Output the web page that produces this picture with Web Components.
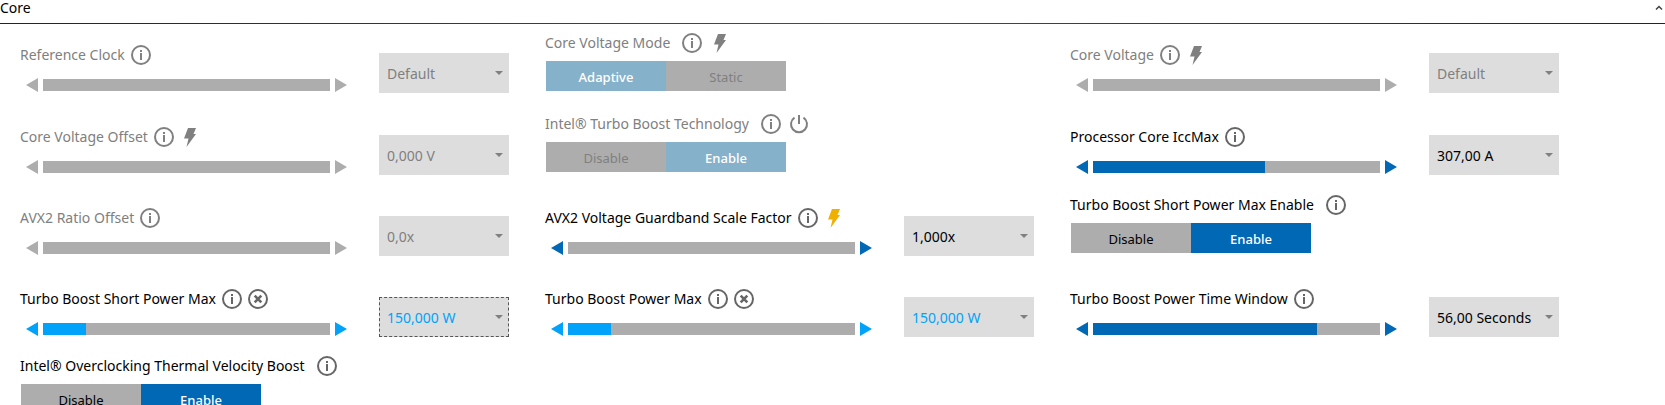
<!DOCTYPE html>
<html lang="en">
<head>
<meta charset="utf-8">
<title>Core tuning</title>
<style>
body { margin: 0; background: #fff; color: #000; font: 14px/20px "Noto Sans", "Open Sans", sans-serif; overflow: hidden; }
</style>
</head>
<body>
<tuning-section heading="Core">
  <tuning-slider state="disabled" value="0" reading="Default">Reference Clock</tuning-slider>
  <tuning-toggle state="disabled" options="Adaptive,Static" selected="0" extra="bolt">Core Voltage Mode</tuning-toggle>
  <tuning-slider state="disabled" value="0" reading="Default" extra="bolt">Core Voltage</tuning-slider>

  <tuning-slider state="disabled" value="0" reading="0,000 V" extra="bolt">Core Voltage Offset</tuning-slider>
  <tuning-toggle state="disabled" options="Disable,Enable" selected="1" extra="power">Intel® Turbo Boost Technology</tuning-toggle>
  <tuning-slider value="60" reading="307,00 A">Processor Core IccMax</tuning-slider>

  <tuning-slider state="disabled" value="0" reading="0,0x">AVX2 Ratio Offset</tuning-slider>
  <tuning-slider value="0" reading="1,000x" extra="bolt">AVX2 Voltage Guardband Scale Factor</tuning-slider>
  <tuning-toggle options="Disable,Enable" selected="1">Turbo Boost Short Power Max Enable</tuning-toggle>

  <tuning-slider state="changed" focused value="15" reading="150,000 W" extra="cross">Turbo Boost Short Power Max</tuning-slider>
  <tuning-slider state="changed" value="15" reading="150,000 W" extra="cross">Turbo Boost Power Max</tuning-slider>
  <tuning-slider value="78" reading="56,00 Seconds">Turbo Boost Power Time Window</tuning-slider>

  <tuning-toggle options="Disable,Enable" selected="1">Intel® Overclocking Thermal Velocity Boost</tuning-toggle>
</tuning-section>

<script>
const ICONS = {
  info: '<circle cx="10" cy="10" r="9" fill="none" stroke="currentColor" stroke-width="2"/><path d="M9 5h2v2H9zM9 8h2v7H9z" fill="currentColor"/>',
  bolt: '<path d="M8 1h8l-2.5 6H16L6.5 20l2-8.5H4z" fill="currentColor"/>',
  cross: '<circle cx="10" cy="10" r="9" fill="none" stroke="currentColor" stroke-width="2"/><path d="M6.7 6.7l6.6 6.6M13.3 6.7l-6.6 6.6" fill="none" stroke="currentColor" stroke-width="2.6"/>',
  power: '<path d="M10 1v9M5.5 3.6a8 8 0 1 0 9 0" fill="none" stroke="currentColor" stroke-width="2"/>'
};
const NAMES = { info: 'Information', bolt: 'Voltage notice', cross: 'Discard change', power: 'Restart required' };

class TuningIcon extends HTMLElement {
  connectedCallback() {
    const kind = this.getAttribute('kind');
    this.attachShadow({ mode: 'open' }).innerHTML = `
      <style>
        :host { display: block; width: 20px; height: 20px; flex: none; }
        button { display: block; width: 100%; height: 100%; padding: 0; border: 0; background: none; color: inherit; }
        svg { display: block; }
      </style>
      <button type="button" aria-label="${NAMES[kind]}"><svg width="20" height="20" viewBox="0 0 20 20">${ICONS[kind]}</svg></button>`;
  }
}
customElements.define('tuning-icon', TuningIcon);

const FIELD_STYLE = `
  :host { --accent: #0068b5; --text: #000; --icon: #666; --bolt: #f0b000; display: block; color: var(--text); min-width: 0; }
  :host([state="disabled"]) { --accent: #adadad; --text: #808080; --icon: #808080; --bolt: #808080; }
  :host([state="changed"]) { --accent: #00a3f9; }
  .head { display: flex; align-items: center; height: 20px; white-space: nowrap; }
  tuning-icon { color: var(--icon); }
  tuning-icon[kind="bolt"] { color: var(--bolt); }
`;
function icons(host) {
  const extra = host.getAttribute('extra');
  return '<tuning-icon kind="info"></tuning-icon>' + (extra ? `<tuning-icon kind="${extra}"></tuning-icon>` : '');
}

class TuningSlider extends HTMLElement {
  connectedCallback() {
    const off = this.getAttribute('state') === 'disabled' ? 'disabled' : '';
    const value = this.getAttribute('value');
    const reading = this.getAttribute('reading');
    this.attachShadow({ mode: 'open' }).innerHTML = `
      <style>
        ${FIELD_STYLE}
        :host { display: grid; grid-template-columns: minmax(0, 1fr) 130px; column-gap: 32px; padding: 14px 36px 0 0; align-content: start; }
        .head { gap: 6px; }
        .track { display: flex; align-items: center; gap: 5px; padding: 13px 0 0 6px; }
        .step { display: block; flex: none; width: 12px; height: 14px; padding: 0; border: 0; background: none; color: var(--accent); }
        .step svg { display: block; }
        input { appearance: none; flex: 1; min-width: 0; height: 12px; margin: 0; border-radius: 0;
          background: linear-gradient(90deg, var(--accent) var(--fill), #adadad var(--fill)); }
        input::-webkit-slider-thumb { appearance: none; width: 1px; height: 12px; background: transparent; }
        .pick { display: grid; grid-template-columns: 1fr; align-items: center; height: 40px; margin-top: 8px; }
        select, .pick svg { grid-area: 1 / 1; }
        select { appearance: none; box-sizing: border-box; width: 100%; height: 40px; margin: 0; padding: 1px 7px 0;
          border: 1px solid #ddd; border-radius: 0; background: #ddd; color: var(--text); font: inherit; opacity: 1; outline: 0; }
        :host([state="changed"]) select { color: #00a3f9; }
        :host([focused]) select { border: 1px dashed #555; }
        .pick svg { justify-self: end; margin-right: 6px; pointer-events: none; }
      </style>
      <div>
        <div class="head"><label for="range"><slot></slot></label>${icons(this)}</div>
        <div class="track">
          <button class="step" type="button" aria-label="Decrease" ${off}><svg width="12" height="14"><path d="M12 0v14L0 7z" fill="currentColor"/></svg></button>
          <input id="range" type="range" min="0" max="100" value="${value}" style="--fill: ${value}%" ${off}>
          <button class="step" type="button" aria-label="Increase" ${off}><svg width="12" height="14"><path d="M0 0v14l12-7z" fill="currentColor"/></svg></button>
        </div>
      </div>
      <div class="pick">
        <select aria-label="${this.textContent} value" ${off}><option>${reading}</option></select>
        <svg width="8" height="4"><path d="M0 0h8L4 4z" fill="#808080"/></svg>
      </div>`;
    const range = this.shadowRoot.getElementById('range');
    const paint = () => range.style.setProperty('--fill', range.value + '%');
    range.addEventListener('input', paint);
    this.shadowRoot.querySelectorAll('.step').forEach((b, i) => b.addEventListener('click', () => {
      i ? range.stepUp() : range.stepDown();
      paint();
    }));
  }
}
customElements.define('tuning-slider', TuningSlider);

class TuningToggle extends HTMLElement {
  connectedCallback() {
    const off = this.getAttribute('state') === 'disabled' ? 'disabled' : '';
    const selected = Number(this.getAttribute('selected'));
    const buttons = this.getAttribute('options').split(',').map((o, i) =>
      `<button type="button" aria-pressed="${i === selected}" ${off}>${o}</button>`).join('');
    this.attachShadow({ mode: 'open' }).innerHTML = `
      <style>
        ${FIELD_STYLE}
        :host { align-self: end; padding-bottom: 22px; }
        .head { gap: 8px; }
        .name { margin-right: 4px; }
        .group { display: grid; grid-template-columns: 1fr 1fr; width: 240px; margin: 8px 0 0 1px; }
        .group button { height: 30px; padding: 2px 0 0; border: 0; background: #adadad; color: var(--text); font: inherit; font-size: 13px; }
        .group button[aria-pressed="true"] { background: #0068b5; color: #fff; font-weight: 500; }
        :host([state="disabled"]) .group button[aria-pressed="true"] { background: #86b1ca; }
      </style>
      <div class="head"><span class="name" id="name"><slot></slot></span>${icons(this)}</div>
      <div class="group" role="group" aria-labelledby="name">${buttons}</div>`;
    const all = [...this.shadowRoot.querySelectorAll('.group button')];
    all.forEach(b => b.addEventListener('click', () => all.forEach(o => o.setAttribute('aria-pressed', o === b))));
  }
}
customElements.define('tuning-toggle', TuningToggle);

class TuningSection extends HTMLElement {
  connectedCallback() {
    this.attachShadow({ mode: 'open' }).innerHTML = `
      <style>
        :host { display: block; }
        header { display: flex; justify-content: space-between; align-items: center; height: 23px; padding: 0 2px 0 0; }
        h2 { margin: 0 0 7px; font: inherit; }
        header button { display: block; width: 8px; height: 5px; margin: 0 0 8px; padding: 0; border: 0; background: none; }
        header svg { display: block; }
        .rule { height: 1px; background: linear-gradient(90deg, #002a5c, #005fa8 50%, #002a5c); }
        .grid { display: grid; grid-template-columns: repeat(3, minmax(0, 1fr)); grid-template-rows: 82px 81px 81px 81px 80px; padding: 7px 70px 0 20px; }
      </style>
      <header>
        <h2>${this.getAttribute('heading')}</h2>
        <button type="button" aria-label="Collapse"><svg width="8" height="5"><path d="M1 4.5L4 1.5l3 3" fill="none" stroke="#444" stroke-width="1.5"/></svg></button>
      </header>
      <div class="rule"></div>
      <div class="grid"><slot></slot></div>`;
  }
}
customElements.define('tuning-section', TuningSection);
</script>
</body>
</html>
